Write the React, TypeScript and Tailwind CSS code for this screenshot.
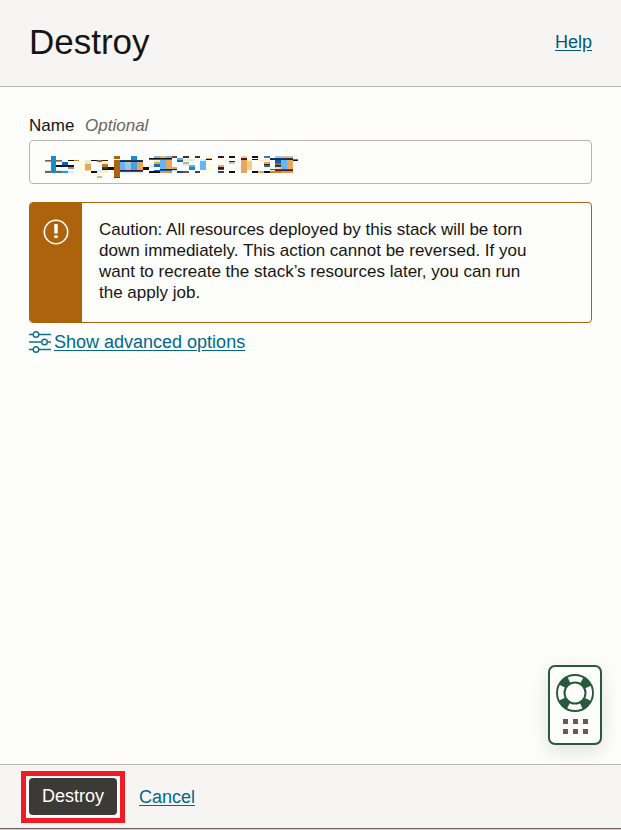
import { useState } from "react";

type Cell = [x: number, y: number, w: number, h: number, fill: string];

// Mosaic that hides the stack's name.
const MOSAIC: Cell[] = [
  [0, 5, 17, 1, "#7d6050"], [0, 6, 17, 1, "#a9978f"], [0, 15, 17, 1, "#c9f4ff"], [0, 16, 17, 2, "#7d6050"],
  [6, 1, 5, 17, "#1b8ccb"],
  [11, 10, 18, 2, "#15100f"], [17, 7, 6, 3, "#0a62b4"], [17, 10, 6, 2, "#0c0878"],
  [23, 5, 6, 1, "#15100f"], [29, 5, 5, 1, "#c98428"], [23, 12, 6, 2, "#a38c86"],
  [17, 15, 6, 1, "#c9f4ff"], [17, 16, 6, 2, "#3d94cf"], [23, 16, 6, 2, "#c9f4ff"],
  [34, 5, 6, 13, "#fffde2"], [40, 5, 6, 2, "#c9f4ff"], [40, 7, 6, 2, "#ffe0ae"], [40, 9, 6, 6, "#e6a65b"],
  [40, 15, 6, 1, "#ffd19a"], [46, 5, 6, 1, "#15100f"], [46, 16, 6, 2, "#15100f"],
  [52, 5, 5, 2, "#ad6412"], [52, 7, 5, 1, "#c9f4ff"], [52, 15, 5, 2, "#c9f4ff"], [52, 21, 5, 2, "#eeb374"],
  [57, 5, 6, 1, "#4d1320"], [57, 7, 6, 2, "#fff0b8"], [57, 9, 6, 3, "#c57a16"], [57, 12, 12, 3, "#15100f"], [57, 12, 6, 2, "#0d3c72"], [57, 15, 6, 3, "#fff0b8"],
  [69, 1, 6, 3, "#ad6412"], [69, 5, 6, 17, "#ad6412"], [69, 22, 6, 1, "#2b4a78"],
  [86, 1, 6, 4, "#1b8ccb"],
  [75, 5, 23, 1, "#0d3c72"], [75, 6, 23, 1, "#4d1320"],
  [75, 7, 5, 8, "#62b6f6"], [80, 7, 6, 8, "#f4b66e"], [86, 7, 6, 8, "#4d9fdc"], [92, 7, 6, 8, "#e6a65b"],
  [80, 9, 6, 6, "#86c9ff"],
  [75, 15, 23, 1, "#4d1320"], [75, 16, 23, 1, "#0d5da8"], [75, 17, 23, 1, "#c9f4ff"],
  [98, 12, 6, 3, "#15100f"],
  [109, 1, 6, 2, "#7faed4"], [115, 1, 6, 2, "#e6b676"], [121, 1, 6, 2, "#7faed4"],
  [104, 3, 23, 1, "#15100f"], [104, 4, 23, 1, "#8c4a22"], [109, 5, 6, 2, "#fff0b8"], [109, 7, 6, 2, "#e6a65b"], [109, 9, 6, 3, "#1a6fae"],
  [104, 10, 5, 3, "#c9f4ff"], [104, 16, 11, 2, "#15100f"],
  [115, 5, 6, 9, "#62b6f6"], [121, 5, 6, 9, "#e6a65b"], [115, 14, 12, 1, "#4d1320"], [109, 15, 18, 1, "#0d5da8"], [115, 16, 12, 2, "#d99a52"],
  [127, 1, 5, 2, "#6d4632"], [127, 12, 5, 2, "#e6a65b"], [127, 14, 5, 1, "#0c0878"], [127, 15, 5, 2, "#c9f4ff"],
  [132, 3, 6, 2, "#5ab0e8"], [132, 5, 6, 2, "#0f6fb8"], [138, 1, 6, 2, "#4d2d16"], [138, 4, 6, 2, "#c9f4ff"], [138, 7, 6, 2, "#e6a65b"],
  [138, 9, 6, 2, "#c9f4ff"], [144, 4, 6, 2, "#c9f4ff"], [144, 10, 6, 2, "#5ab0e8"], [144, 12, 6, 3, "#1b8ccb"],
  [132, 16, 6, 2, "#28456b"], [138, 16, 6, 2, "#6d5148"], [150, 1, 5, 2, "#4d2d16"], [150, 16, 5, 2, "#28456b"],
  [155, 4, 6, 2, "#c9f4ff"], [155, 6, 6, 9, "#62b6f6"], [161, 3, 6, 1, "#e6a65b"], [161, 4, 6, 1, "#15100f"], [161, 6, 6, 12, "#fffde2"],
  [173, 1, 6, 2, "#36181c"], [173, 10, 6, 2, "#e6a65b"], [173, 12, 6, 2, "#36181c"], [173, 14, 6, 1, "#0d5da8"], [173, 16, 6, 2, "#28456b"],
  [184, 1, 6, 2, "#15100f"], [184, 6, 6, 1, "#4d1320"], [184, 7, 6, 2, "#d3bfc2"], [184, 16, 6, 2, "#15100f"], [190, 12, 6, 2, "#dffbff"],
  [196, 1, 6, 2, "#ffc987"], [196, 3, 6, 2, "#4d1320"], [196, 5, 6, 13, "#e6a65b"],
  [202, 5, 5, 1, "#fff0b8"], [202, 6, 5, 9, "#ffc987"], [207, 1, 6, 2, "#15100f"], [207, 4, 6, 1, "#0c0878"],
  [213, 5, 6, 1, "#ffedb4"], [207, 16, 6, 2, "#15100f"], [213, 16, 6, 2, "#e6a65b"],
  [219, 1, 6, 2, "#4674a0"], [219, 4, 6, 2, "#ffedb4"], [219, 7, 6, 2, "#e6a65b"], [219, 9, 6, 1, "#4d1320"], [219, 10, 6, 2, "#1a6fae"],
  [225, 3, 23, 1, "#0d3c72"], [225, 4, 23, 1, "#4d1320"], [230, 1, 6, 2, "#9dc4e4"], [236, 1, 12, 2, "#eab67a"],
  [230, 5, 6, 3, "#0d5da8"], [230, 8, 6, 2, "#ad6412"], [230, 10, 6, 2, "#0d3c72"], [230, 12, 6, 2, "#ffd19a"],
  [236, 5, 6, 9, "#62b6f6"], [242, 5, 6, 9, "#e6a65b"], [225, 14, 23, 1, "#0d5da8"], [230, 15, 18, 1, "#4d1320"],
  [219, 16, 6, 2, "#15100f"], [225, 16, 11, 2, "#c98428"], [236, 16, 12, 2, "#d99a52"],
  [248, 4, 5, 1, "#ad6412"], [248, 5, 5, 1, "#15100f"],
];

function CautionIcon() {
  return (
    <svg width="26" height="26" viewBox="0 0 26 26" fill="none" aria-hidden="true">
      <circle cx="13" cy="13" r="11.7" stroke="#fff" strokeWidth="1.6" />
      <path d="M11.3 5h3.400v9.500h-3.400zM11.3 16.500h3.400V19h-3.400z" fill="#fff" />
    </svg>
  );
}

function SlidersIcon() {
  return (
    <svg width="22" height="22" viewBox="0 0 22 22" fill="none" stroke="#12708f" strokeWidth="1.4" aria-hidden="true">
      <path d="M0 3.500h4M10 3.500h12M0 11h12M18 11h4M0 18.500h4M10 18.500h12" />
      <circle cx="7" cy="3.500" r="2.800" />
      <circle cx="15.500" cy="11" r="2.800" />
      <circle cx="7" cy="18.500" r="2.800" />
    </svg>
  );
}

function LifebuoyIcon() {
  return (
    <svg width="38" height="38" viewBox="0 0 38 38" fill="none" aria-hidden="true">
      <g stroke="#28593c">
        <circle cx="19" cy="19" r="14" strokeWidth="8" strokeDasharray="9 12.990" strokeDashoffset="-6.490" />
        <circle cx="19" cy="19" r="18" strokeWidth="1.900" />
        <circle cx="19" cy="19" r="10.500" strokeWidth="2" />
      </g>
    </svg>
  );
}

function GripDots() {
  return (
    <svg width="25" height="15" viewBox="0 0 25 15" fill="#655c59" aria-hidden="true">
      <path d="M0 0h5v5H0zM10 0h5v5h-5zM20 0h5v5h-5zM0 10h5v5H0zM10 10h5v5h-5zM20 10h5v5h-5z" />
    </svg>
  );
}

const link = "text-[#00688c] underline underline-offset-2";

export default function App() {
  const [name, setName] = useState("");

  return (
    <div className="flex min-h-screen flex-col bg-[#fdfdfb] font-['Liberation_Sans',Arial,sans-serif] text-[18px] leading-[21px] text-[#161513]">
      <header className="flex items-center justify-between border-b border-[#b9b3aa] bg-[#f6f5f4] px-[29px] pt-[22px] pb-6">
        <h1 className="text-[35px] leading-10">Destroy</h1>
        <a href="#help" className="text-[#00587c] underline underline-offset-2">Help</a>
      </header>

      <main className="flex-1 px-[29px] pt-7">
        <label htmlFor="job-name" className="block text-[17px]">
          Name <em className="ml-1.5 text-[#6b6662]">Optional</em>
        </label>
        <div className="relative mt-1">
          <input
            id="job-name"
            type="text"
            value={name}
            onChange={(event) => setName(event.target.value)}
            className="block h-11 w-full rounded-[4px] border border-[#bab4ae] bg-[#fdfdfb] px-4"
          />
          <svg
            className="pointer-events-none absolute top-[15px] left-4"
            width="253"
            height="23"
            viewBox="0 0 253 23"
            shapeRendering="crispEdges"
            aria-hidden="true"
          >
            {MOSAIC.map(([x, y, w, h, fill], index) => (
              <rect key={index} x={x} y={y} width={w} height={h} fill={fill} />
            ))}
          </svg>
        </div>

        <div role="alert" className="mt-[18px] flex overflow-hidden rounded-[4px] border border-[#ac630c]">
          <div className="w-[52px] shrink-0 bg-[#ac630c] pt-4 pl-[13px]">
            <CautionIcon />
          </div>
          <p className="pt-4 pr-12 pb-[19px] pl-[17px] text-[17px]">
            Caution: All resources deployed by this stack will be torn down immediately. This action cannot be reversed. If
            you want to recreate the stack’s resources later, you can run the apply job.
          </p>
        </div>

        <a href="#advanced" className="mt-2 flex items-center gap-[3px] text-[#00688c]">
          <SlidersIcon />
          <span className={link}>Show advanced options</span>
        </a>
      </main>

      <button
        type="button"
        aria-label="Support"
        className="fixed right-[19px] bottom-[85px] flex h-20 w-[54px] flex-col items-center gap-[7px] rounded-[7px] border-2 border-[#28593c] bg-[#fdfdfb] pt-[7px] shadow-[0_6px_20px_rgba(0,0,0,0.12)]"
      >
        <LifebuoyIcon />
        <GripDots />
      </button>

      <footer className="border-t border-[#bbb5af] bg-[#f6f5f4]">
        <div className="flex items-center gap-3.5 border-b border-[#6a5d59] px-[21px] pt-1.5 pb-[5px]">
          <div className="border-[5px] border-[#ee1c25] bg-[#fbfaf9] px-[3px] pt-0.5 pb-[3px]">
            <button type="button" className="block h-[37px] w-[88px] rounded-[4px] bg-[#3c3a37] text-white">
              Destroy
            </button>
          </div>
          <a href="#cancel" className={link}>Cancel</a>
        </div>
        <div className="h-px bg-[#d8d2cd]" />
      </footer>
    </div>
  );
}
